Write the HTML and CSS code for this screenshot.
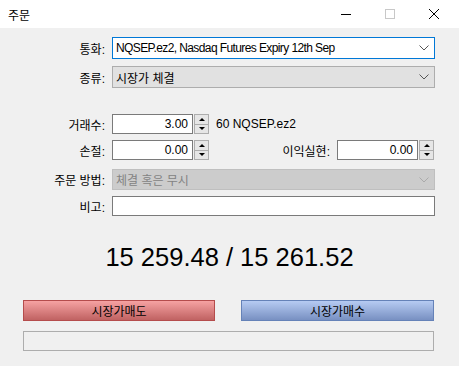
FILE: index.html
```html
<!DOCTYPE html>
<html lang="ko">
<head>
    <meta charset="UTF-8">
    <title>주문</title>
    <link rel="stylesheet" href="styles.css">
</head>
<body>
    <!-- 제목 표시줄 -->
    <div class="titlebar">
        <span class="title">주문</span>
        <div class="controls">
            <span class="ctl"><svg width="10" height="10" viewBox="0 0 10 10"><path d="M0 5.5H10" stroke="#000" stroke-width="1"/></svg></span>
            <span class="ctl"><svg width="10" height="10" viewBox="0 0 10 10"><rect x="0.5" y="0.5" width="9" height="9" fill="none" stroke="#c8c8c8"/></svg></span>
            <span class="ctl"><svg width="10" height="10" viewBox="0 0 10 10"><path d="M0 0L10 10M10 0L0 10" stroke="#000" stroke-width="1"/></svg></span>
        </div>
    </div>

    <div class="form">
        <div class="row r1">
            <label class="lbl">통화:</label>
            <div class="combo focus"><span class="symbol">NQSEP.ez2, Nasdaq Futures Expiry 12th Sep</span>
                <svg class="arrow" width="10" height="6" viewBox="0 0 10 6"><path d="M0.5 0.5L5 5L9.5 0.5" fill="none" stroke="#555"/></svg></div>
        </div>
        <div class="row r2">
            <label class="lbl">종류:</label>
            <div class="combo gray"><span>시장가 체결</span>
                <svg class="arrow" width="10" height="6" viewBox="0 0 10 6"><path d="M0.5 0.5L5 5L9.5 0.5" fill="none" stroke="#555"/></svg></div>
        </div>
        <div class="row r3">
            <label class="lbl">거래수:</label>
            <div class="num">3.00</div>
            <div class="spin"><span><i class="up"></i></span><span><i class="down"></i></span></div>
            <span class="note">60 NQSEP.ez2</span>
        </div>
        <div class="row r4">
            <label class="lbl">손절:</label>
            <div class="num">0.00</div>
            <div class="spin"><span><i class="up"></i></span><span><i class="down"></i></span></div>
            <label class="lbl2">이익실현:</label>
            <div class="num">0.00</div>
            <div class="spin"><span><i class="up"></i></span><span><i class="down"></i></span></div>
        </div>
        <div class="row r5">
            <label class="lbl">주문 방법:</label>
            <div class="combo off"><span>체결 혹은 무시</span>
                <svg class="arrow" width="10" height="6" viewBox="0 0 10 6"><path d="M0.5 0.5L5 5L9.5 0.5" fill="none" stroke="#aaa"/></svg></div>
        </div>
        <div class="row r6">
            <label class="lbl">비고:</label>
            <div class="memo"></div>
        </div>
    </div>

    <div class="price">15 259.48 / 15 261.52</div>

    <div class="buttons">
        <button class="btn sell">시장가매도</button>
        <button class="btn buy">시장가매수</button>
    </div>
    <div class="progress"></div>
</body>
</html>
```

FILE: styles.css
```css
*{
    margin: 0;
    padding: 0;
    box-sizing: border-box;
}
body{
    width: 459px;
    height: 366px;
    background-color: #f0f0f0;
    font-family: "Liberation Sans", "Noto Sans CJK KR", sans-serif;
    font-size: 12px;
    color: #000;
    overflow: hidden;
}
.titlebar{
    height: 28px;
    background-color: #fff;
    display: flex;
    align-items: center;
    justify-content: space-between;
}
.title{
    padding-left: 8px;
    font-size: 12px;
}
.controls{
    display: flex;
    padding-right: 3px;
}
.ctl{
    width: 44px;
    height: 28px;
    display: flex;
    align-items: center;
    justify-content: center;
}

/* 입력 폼 */
.row{
    display: flex;
    align-items: center;
}
.r1{ margin-top: 9px; }
.r2{ margin-top: 7px; }
.r3{ margin-top: 26px; }
.r4{ margin-top: 6px; }
.r5{ margin-top: 9px; }
.r6{ margin-top: 6px; }
.lbl{
    width: 112px;
    padding-right: 7px;
    text-align: right;
}
.lbl2{
    width: 128px;
    padding-right: 7px;
    text-align: right;
}
.combo{
    width: 323px;
    height: 22px;
    border: 1px solid #adadad;
    display: flex;
    align-items: center;
    justify-content: space-between;
    padding: 0 4px 0 3px;
}
.combo.focus{
    background-color: #fff;
    border-color: #0078d7;
}
.symbol{
    letter-spacing: -0.6px;
}
.combo.gray{
    background-color: #e1e1e1;
}
.combo.off{
    height: 21px;
    background-color: #cccccc;
    border-color: #bfbfbf;
    color: #838383;
}
.arrow{
    margin-right: 1px;
}
.num{
    width: 81px;
    height: 20px;
    background-color: #fff;
    border: 1px solid #7a7a7a;
    text-align: right;
    padding-right: 4px;
    line-height: 18px;
}
.spin{
    width: 15px;
    height: 20px;
    margin-left: 1px;
    display: flex;
    flex-direction: column;
}
.spin span{
    flex: 1;
    border: 1px solid #adadad;
    background-color: #e6e6e6;
    display: flex;
    align-items: center;
    justify-content: center;
}
.spin span + span{
    border-top: none;
}
.up{
    width: 0;
    height: 0;
    border-left: 3px solid transparent;
    border-right: 3px solid transparent;
    border-bottom: 3px solid #000;
}
.down{
    width: 0;
    height: 0;
    border-left: 3px solid transparent;
    border-right: 3px solid transparent;
    border-top: 3px solid #000;
}
.note{
    margin-left: 7px;
}
.memo{
    width: 323px;
    height: 20px;
    background-color: #fff;
    border: 1px solid #7a7a7a;
}

/* 가격 */
.price{
    margin-top: 26px;
    height: 30px;
    line-height: 30px;
    text-align: center;
    font-size: 25.5px;
}

/* 버튼 */
.buttons{
    margin-top: 28px;
    padding: 0 25px 0 23px;
    display: flex;
    justify-content: space-between;
}
.btn{
    width: 192px;
    height: 21px;
    font-family: "Liberation Sans", "Noto Sans CJK KR", sans-serif;
    font-size: 12px;
    color: #000;
}
.sell{
    border: 1px solid #b54c4c;
    background: linear-gradient(#f6a2a2, #c06262);
}
.buy{
    width: 193px;
    border: 1px solid #6582b8;
    background: linear-gradient(#b6cbf2, #7890c2);
}
.progress{
    margin: 10px 25px 0 23px;
    height: 20px;
    border: 1px solid #adadad;
    background-color: #f0f0f0;
}
```
